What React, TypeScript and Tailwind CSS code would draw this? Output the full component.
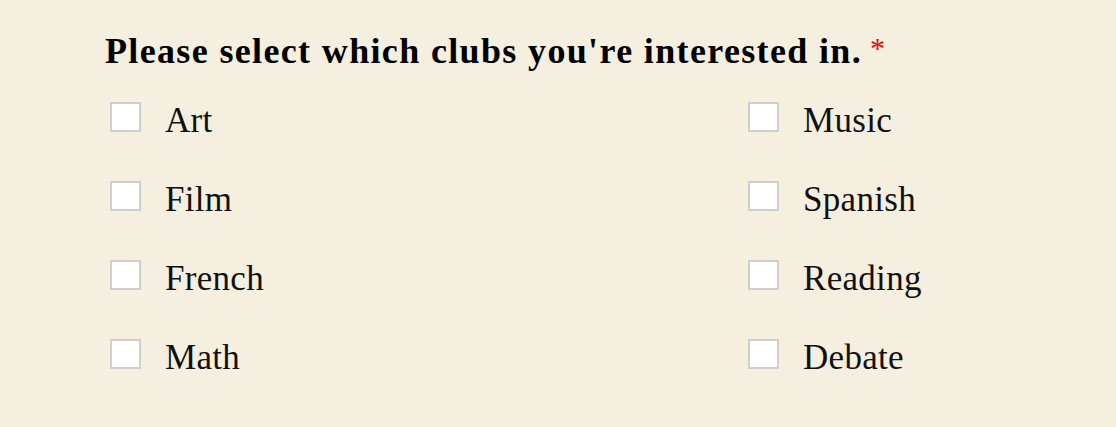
const clubs: [string, string][] = [
  ["Art", "Music"],
  ["Film", "Spanish"],
  ["French", "Reading"],
  ["Math", "Debate"],
];

function Option({ label }: { label: string }) {
  return (
    <label className="flex items-start gap-[24px] h-[79px] cursor-pointer select-none">
      <span className="w-[31px] h-[30px] shrink-0 bg-white border-2 border-[#cfcfcf]" />
      <span className="text-[35px] leading-[30px] pt-[4px] tracking-[0.3px] text-[#111]">{label}</span>
    </label>
  );
}

export default function App() {
  return (
    <div
      className="w-[1116px] h-[427px] bg-[#f5efe0] pl-[105px] pt-[30px]"
      style={{ fontFamily: '"Liberation Serif", "Times New Roman", serif' }}
    >
      <p className="text-[36px] leading-[1.2] font-bold tracking-[1.35px] text-black">
        Please select which clubs you're interested in.
        <span className="text-[#ff0000] font-normal text-[30px] ml-[8px] align-top">*</span>
      </p>
      <div className="mt-[29px] pl-[5px] grid grid-cols-[638px_1fr]">
        {clubs.map(([a, b]) => (
          <div key={a} className="contents">
            <Option label={a} />
            <Option label={b} />
          </div>
        ))}
      </div>
    </div>
  );
}
